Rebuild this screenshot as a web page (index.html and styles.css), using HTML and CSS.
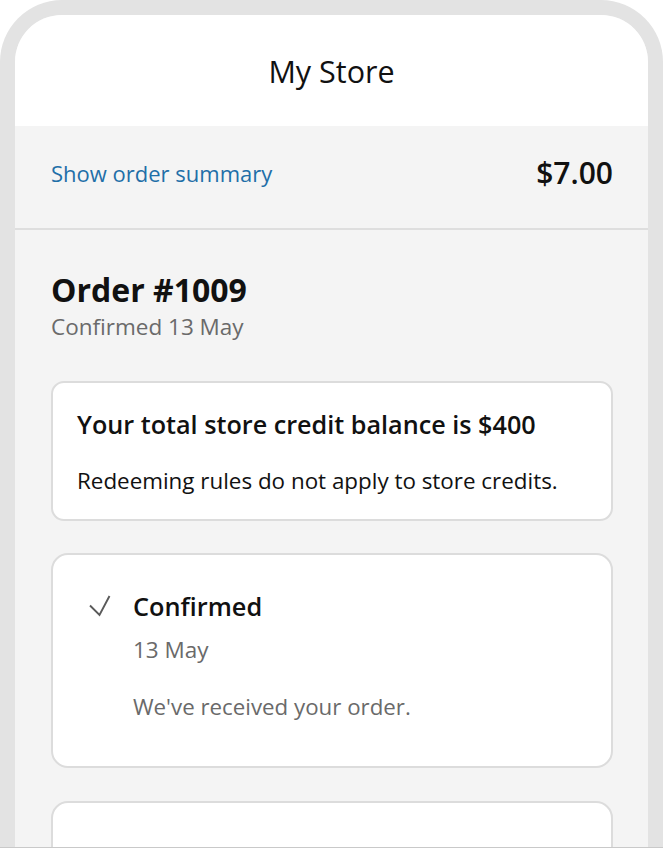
FILE: index.html
```html
<!DOCTYPE html>
<html>
<head>
<meta charset="utf-8">
<link rel="stylesheet" href="styles.css">
</head>
<body>
<div class="device">
  <div class="screen">
    <header class="topbar"><h1 class="store-name">My Store</h1></header>
    <div class="summary">
      <a class="summary-link">Show order summary</a>
      <span class="summary-total">$7.00</span>
    </div>
    <main class="content">
      <div class="order-head">
        <h2 class="order-title">Order #1009</h2>
        <p class="order-sub">Confirmed 13 May</p>
      </div>
      <section class="card credit">
        <h3 class="credit-title">Your total store credit balance is $400</h3>
        <p class="credit-text">Redeeming rules do not apply to store credits.</p>
      </section>
      <section class="card status">
        <div class="status-row">
          <svg class="check" width="22" height="22" viewBox="0 0 22 22"><polyline points="1,10.5 10.5,20 20.5,1" fill="none" stroke="#5a5a5a" stroke-width="1.9"/></svg>
          <span class="status-title">Confirmed</span>
        </div>
        <p class="status-date">13 May</p>
        <p class="status-text">We've received your order.</p>
      </section>
      <section class="card next"></section>
    </main>
  </div>
</div>
</body>
</html>
```
FILE: styles.css
```css
* { box-sizing: border-box; }
html, body { margin: 0; padding: 0; background: #fff; }
body { font-family: "Open Sans", "Noto Sans", sans-serif; color: #111; }
.device {
  width: 663px;
  height: 848px;
  background: #e3e3e3;
  border-radius: 62px 62px 0 0;
  padding: 15px 15px 0;
  border-bottom: 1px solid #c9c9c9;
  overflow: hidden;
}
.screen {
  height: 100%;
  background: #f4f4f4;
  border-radius: 47px 47px 0 0;
  overflow: hidden;
}
.topbar {
  height: 111px;
  background: #fff;
  display: flex;
  align-items: center;
  justify-content: center;
}
.store-name {
  margin: 0;
  font-size: 30.5px;
  font-weight: 400;
  line-height: 40px;
}
.summary {
  height: 104px;
  display: flex;
  align-items: center;
  justify-content: space-between;
  padding: 0 35px 9px 36px;
  border-bottom: 2px solid #dedede;
}
.summary-link { color: #1f6fa8; font-size: 22px; line-height: 30px; }
.summary-total { font-size: 30px; font-weight: 600; color: #111; line-height: 40px; }
.content { padding: 39px 35px 0 36px; }
.order-title { margin: 0; font-size: 32px; font-weight: 700; line-height: 42px; }
.order-sub { margin: 1px 0 0; font-size: 22.5px; color: #6a6a6a; line-height: 30px; }
.order-head { margin-bottom: 39px; }
.card {
  background: #fff;
  border: 2px solid #dcdcdc;
  border-radius: 13px;
}
.credit { height: 140px; padding: 24px 24px 0; margin-bottom: 32px; }
.credit-title { margin: 0; font-size: 25.2px; font-weight: 600; line-height: 34px; }
.credit-text { margin: 25px 0 0; font-size: 22.4px; line-height: 30px; }
.status { height: 215px; padding: 34px 24px 0 36px; border-radius: 17px; margin-bottom: 33px; }
.status-row { display: flex; align-items: center; gap: 22px; }
.check { display: block; }
.status-title { font-size: 25.3px; font-weight: 600; line-height: 34px; }
.status-date { margin: 12px 0 0 44px; font-size: 22.5px; color: #6a6a6a; line-height: 30px; }
.status-text { margin: 27px 0 0 44px; font-size: 22.3px; color: #6a6a6a; line-height: 30px; }
.next { height: 120px; border-radius: 17px; }
```
